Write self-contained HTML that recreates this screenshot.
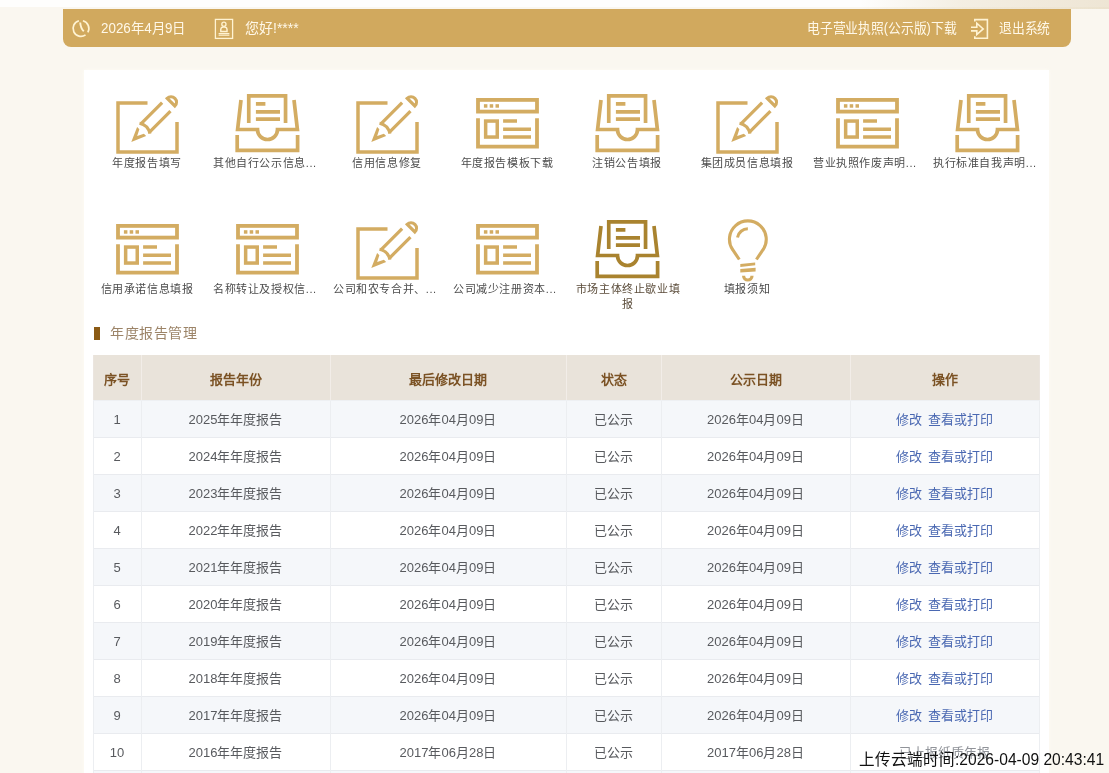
<!DOCTYPE html>
<html lang="zh-CN"><head><meta charset="utf-8">
<style>
*{margin:0;padding:0;box-sizing:border-box}
html,body{width:1109px;height:773px;overflow:hidden;background:#faf7f0;font-family:"Liberation Sans",sans-serif}
.abs{position:absolute}
#topstrip{position:absolute;left:0;top:0;width:1109px;height:7px;background:#fefefd}
#deco{position:absolute;left:860px;top:0;width:249px;height:9px;background:linear-gradient(90deg,rgba(225,210,180,0) 0%,rgba(225,210,180,.35) 40%,rgba(222,205,172,.5) 100%)}
#bar{position:absolute;left:63px;top:9px;width:1008px;height:38px;background:#d1a95e;border-radius:0 0 8px 8px}
.sx{display:inline-block;transform-origin:0 50%}
.bt{position:absolute;top:9px;height:38px;line-height:38px;color:#fff8e8;font-size:14px;white-space:nowrap}
#panel{position:absolute;left:84px;top:70px;width:965px;height:720px;background:#fff;box-shadow:0 0 4px rgba(255,254,246,.9)}
.ic{position:absolute;overflow:visible}
.lbl{position:absolute;width:108px;text-align:center;font-size:11px;letter-spacing:0.6px;line-height:15px;color:#4c4c4c;white-space:nowrap;overflow:hidden}
.hov{white-space:normal;color:#5b4c3a}
#sec{position:absolute;left:94px;top:327px;width:6px;height:13px;background:#8b5a14}
#sect{position:absolute;left:110px;top:323px;font-size:14px;letter-spacing:0.6px;line-height:20px;color:#9c8468}
.th{position:absolute;background:#e9e3da}
.ht{position:absolute;height:45px;line-height:45px;text-align:center;font-size:13px;font-weight:bold;color:#7b5224}
.tr{position:absolute;height:37px;border-bottom:1px solid #e9ebef}
.td{position:absolute;height:37px;line-height:37px;text-align:center;font-size:13px;color:#585a5e}
.vl{position:absolute;width:1px;background:#eceef1}
.vh{position:absolute;width:1px;background:#f2ede8}
.hl{position:absolute;height:1px;background:#eef0f3}
.lk{color:#4a68b2}
.gr{color:#909399}
#stamp{position:absolute;left:859px;top:750px;font-size:15.6px;line-height:20px;color:#111}
</style></head><body><div id="root" style="will-change:transform;position:absolute;left:0;top:0;width:1109px;height:773px;overflow:hidden">
<div id="topstrip"></div>
<div id="deco"></div>
<div id="bar"></div>
<svg class="abs" style="left:70px;top:17px" width="24" height="24" viewBox="0 0 24 24">
<g fill="none" stroke="#fff3d2" stroke-width="1.8"><path d="M8.9 3.8 A7.9 7.9 0 1 0 15.53 17.87 M17.84 15.35 A7.9 7.9 0 0 0 12.9 3.8" stroke-width="1.7"/><path d="M10.2 5.5 Q10.6 11.3 13.8 14.3" stroke-width="1.9"/></g>
</svg>
<div class="bt" style="left:101px"><span class="sx" style="transform:scaleX(0.956)">2026年4月9日</span></div>
<svg class="abs" style="left:208px;top:14px" width="32" height="30" viewBox="208 14 32 30">
<g fill="none" stroke="#fff3d2" stroke-width="1.3"><rect x="215.4" y="19.4" width="17.2" height="19"/><circle cx="223.9" cy="24.3" r="2.1"/>
<path d="M220.8 31.4 Q220.2 26.7 223.9 26.9 Q227.6 26.7 227 31.4 Z" stroke-width="1.5"/><path d="M218.6 33.6 H229.4 M218.6 35.2 H229.4" stroke-width="1.1"/></g>
</svg>
<div class="bt" style="left:245px">您好!****</div>
<div class="bt" style="left:807px"><span class="sx" style="transform:scaleX(0.915)">电子营业执照(公示版)下载</span></div>
<svg class="abs" style="left:964px;top:14px" width="32" height="30" viewBox="964 14 32 30">
<g fill="none" stroke="#fff3d2" stroke-width="1.6"><path d="M974.8 21.6 V19.6 H987.4 V38.2 H974.8 V36.3"/><path d="M971 27.3 H976.8 V23.2 L983.2 28.9 L976.8 34.5 V30.9 H971" stroke-linejoin="miter"/></g>
</svg>
<div class="bt" style="left:999px"><span class="sx" style="transform:scaleX(0.915)">退出系统</span></div>
<div id="panel"></div>
<svg class="ic" style="left:115px;top:92px" width="64" height="64" viewBox="0 0 64 64">
<path d="M32.5 11 H3 V60 H62 V30" fill="none" stroke="#d3ac62" stroke-width="3.5" stroke-linejoin="miter"/>
<g transform="translate(16.3 49.9) rotate(45)" fill="none" stroke="#d3ac62" stroke-width="3.2">
<path d="M-5.9 -49.5 V-19.5 M5.9 -49.5 V-19.5"/>
<path d="M-7.4 -19 Q0 -23.8 7.4 -19"/>
<polygon fill="#d3ac62" stroke="none" points="0,0 -6.4,-14.6 -3.2,-14.6 0,-8.3 3.2,-14.6 6.4,-14.6"/>
<path d="M-5.4 -56.2 H5.4 A5.4 5.4 0 0 0 -5.4 -56.2 Z" stroke-width="3.2"/>
</g>
</svg>
<div class="lbl" style="left:93px;top:156px">年度报告填写</div>
<svg class="ic" style="left:235px;top:92px" width="64" height="64" viewBox="0 0 64 64">
<g fill="none" stroke="#d3ac62" stroke-width="3.7">
<path d="M13.75 31 V3.95 H50.55 V31"/>
<path d="M20.9 11.8 H30.4 M20.9 19.8 H45 M20.9 27.1 H45"/>
<path d="M6 8 L2.6 37.5 H22.5 A10 10 0 0 0 42.5 37.5 H62.4 L59 8"/>
<path d="M2.2 43 V58.4 H62.6 V43"/>
</g>
</svg>
<div class="lbl" style="text-align:left;left:213px;top:156px">其他自行公示信息...</div>
<svg class="ic" style="left:355px;top:92px" width="64" height="64" viewBox="0 0 64 64">
<path d="M32.5 11 H3 V60 H62 V30" fill="none" stroke="#d3ac62" stroke-width="3.5" stroke-linejoin="miter"/>
<g transform="translate(16.3 49.9) rotate(45)" fill="none" stroke="#d3ac62" stroke-width="3.2">
<path d="M-5.9 -49.5 V-19.5 M5.9 -49.5 V-19.5"/>
<path d="M-7.4 -19 Q0 -23.8 7.4 -19"/>
<polygon fill="#d3ac62" stroke="none" points="0,0 -6.4,-14.6 -3.2,-14.6 0,-8.3 3.2,-14.6 6.4,-14.6"/>
<path d="M-5.4 -56.2 H5.4 A5.4 5.4 0 0 0 -5.4 -56.2 Z" stroke-width="3.2"/>
</g>
</svg>
<div class="lbl" style="left:333px;top:156px">信用信息修复</div>
<svg class="ic" style="left:474px;top:92px" width="64" height="64" viewBox="0 0 64 64">
<g fill="none" stroke="#d3ac62" stroke-width="3.8">
<rect x="4" y="7.9" width="59" height="11.7"/>
<path d="M4 26.2 V54.7 H63 V26.2"/>
</g>
<g fill="#d3ac62">
<rect x="9.9" y="12.2" width="3.5" height="3.5"/>
<rect x="15.7" y="12.2" width="3.5" height="3.5"/>
<rect x="21.5" y="12.2" width="3.5" height="3.5"/>
</g>
<g fill="none" stroke="#d3ac62" stroke-width="3.5">
<rect x="11.65" y="29.05" width="11.6" height="16"/>
<path d="M29.1 29.05 H43 M29.1 37.25 H57 M29.1 45 H57"/>
</g>
</svg>
<div class="lbl" style="left:453px;top:156px">年度报告模板下载</div>
<svg class="ic" style="left:595px;top:92px" width="64" height="64" viewBox="0 0 64 64">
<g fill="none" stroke="#d3ac62" stroke-width="3.7">
<path d="M13.75 31 V3.95 H50.55 V31"/>
<path d="M20.9 11.8 H30.4 M20.9 19.8 H45 M20.9 27.1 H45"/>
<path d="M6 8 L2.6 37.5 H22.5 A10 10 0 0 0 42.5 37.5 H62.4 L59 8"/>
<path d="M2.2 43 V58.4 H62.6 V43"/>
</g>
</svg>
<div class="lbl" style="left:573px;top:156px">注销公告填报</div>
<svg class="ic" style="left:715px;top:92px" width="64" height="64" viewBox="0 0 64 64">
<path d="M32.5 11 H3 V60 H62 V30" fill="none" stroke="#d3ac62" stroke-width="3.5" stroke-linejoin="miter"/>
<g transform="translate(16.3 49.9) rotate(45)" fill="none" stroke="#d3ac62" stroke-width="3.2">
<path d="M-5.9 -49.5 V-19.5 M5.9 -49.5 V-19.5"/>
<path d="M-7.4 -19 Q0 -23.8 7.4 -19"/>
<polygon fill="#d3ac62" stroke="none" points="0,0 -6.4,-14.6 -3.2,-14.6 0,-8.3 3.2,-14.6 6.4,-14.6"/>
<path d="M-5.4 -56.2 H5.4 A5.4 5.4 0 0 0 -5.4 -56.2 Z" stroke-width="3.2"/>
</g>
</svg>
<div class="lbl" style="left:693px;top:156px">集团成员信息填报</div>
<svg class="ic" style="left:834px;top:92px" width="64" height="64" viewBox="0 0 64 64">
<g fill="none" stroke="#d3ac62" stroke-width="3.8">
<rect x="4" y="7.9" width="59" height="11.7"/>
<path d="M4 26.2 V54.7 H63 V26.2"/>
</g>
<g fill="#d3ac62">
<rect x="9.9" y="12.2" width="3.5" height="3.5"/>
<rect x="15.7" y="12.2" width="3.5" height="3.5"/>
<rect x="21.5" y="12.2" width="3.5" height="3.5"/>
</g>
<g fill="none" stroke="#d3ac62" stroke-width="3.5">
<rect x="11.65" y="29.05" width="11.6" height="16"/>
<path d="M29.1 29.05 H43 M29.1 37.25 H57 M29.1 45 H57"/>
</g>
</svg>
<div class="lbl" style="text-align:left;left:813px;top:156px">营业执照作废声明...</div>
<svg class="ic" style="left:955px;top:92px" width="64" height="64" viewBox="0 0 64 64">
<g fill="none" stroke="#d3ac62" stroke-width="3.7">
<path d="M13.75 31 V3.95 H50.55 V31"/>
<path d="M20.9 11.8 H30.4 M20.9 19.8 H45 M20.9 27.1 H45"/>
<path d="M6 8 L2.6 37.5 H22.5 A10 10 0 0 0 42.5 37.5 H62.4 L59 8"/>
<path d="M2.2 43 V58.4 H62.6 V43"/>
</g>
</svg>
<div class="lbl" style="text-align:left;left:933px;top:156px">执行标准自我声明...</div>
<svg class="ic" style="left:114px;top:218px" width="64" height="64" viewBox="0 0 64 64">
<g fill="none" stroke="#d3ac62" stroke-width="3.8">
<rect x="4" y="7.9" width="59" height="11.7"/>
<path d="M4 26.2 V54.7 H63 V26.2"/>
</g>
<g fill="#d3ac62">
<rect x="9.9" y="12.2" width="3.5" height="3.5"/>
<rect x="15.7" y="12.2" width="3.5" height="3.5"/>
<rect x="21.5" y="12.2" width="3.5" height="3.5"/>
</g>
<g fill="none" stroke="#d3ac62" stroke-width="3.5">
<rect x="11.65" y="29.05" width="11.6" height="16"/>
<path d="M29.1 29.05 H43 M29.1 37.25 H57 M29.1 45 H57"/>
</g>
</svg>
<div class="lbl" style="left:93px;top:282px">信用承诺信息填报</div>
<svg class="ic" style="left:234px;top:218px" width="64" height="64" viewBox="0 0 64 64">
<g fill="none" stroke="#d3ac62" stroke-width="3.8">
<rect x="4" y="7.9" width="59" height="11.7"/>
<path d="M4 26.2 V54.7 H63 V26.2"/>
</g>
<g fill="#d3ac62">
<rect x="9.9" y="12.2" width="3.5" height="3.5"/>
<rect x="15.7" y="12.2" width="3.5" height="3.5"/>
<rect x="21.5" y="12.2" width="3.5" height="3.5"/>
</g>
<g fill="none" stroke="#d3ac62" stroke-width="3.5">
<rect x="11.65" y="29.05" width="11.6" height="16"/>
<path d="M29.1 29.05 H43 M29.1 37.25 H57 M29.1 45 H57"/>
</g>
</svg>
<div class="lbl" style="text-align:left;left:213px;top:282px">名称转让及授权信...</div>
<svg class="ic" style="left:355px;top:218px" width="64" height="64" viewBox="0 0 64 64">
<path d="M32.5 11 H3 V60 H62 V30" fill="none" stroke="#d3ac62" stroke-width="3.5" stroke-linejoin="miter"/>
<g transform="translate(16.3 49.9) rotate(45)" fill="none" stroke="#d3ac62" stroke-width="3.2">
<path d="M-5.9 -49.5 V-19.5 M5.9 -49.5 V-19.5"/>
<path d="M-7.4 -19 Q0 -23.8 7.4 -19"/>
<polygon fill="#d3ac62" stroke="none" points="0,0 -6.4,-14.6 -3.2,-14.6 0,-8.3 3.2,-14.6 6.4,-14.6"/>
<path d="M-5.4 -56.2 H5.4 A5.4 5.4 0 0 0 -5.4 -56.2 Z" stroke-width="3.2"/>
</g>
</svg>
<div class="lbl" style="text-align:left;left:333px;top:282px">公司和农专合并、...</div>
<svg class="ic" style="left:474px;top:218px" width="64" height="64" viewBox="0 0 64 64">
<g fill="none" stroke="#d3ac62" stroke-width="3.8">
<rect x="4" y="7.9" width="59" height="11.7"/>
<path d="M4 26.2 V54.7 H63 V26.2"/>
</g>
<g fill="#d3ac62">
<rect x="9.9" y="12.2" width="3.5" height="3.5"/>
<rect x="15.7" y="12.2" width="3.5" height="3.5"/>
<rect x="21.5" y="12.2" width="3.5" height="3.5"/>
</g>
<g fill="none" stroke="#d3ac62" stroke-width="3.5">
<rect x="11.65" y="29.05" width="11.6" height="16"/>
<path d="M29.1 29.05 H43 M29.1 37.25 H57 M29.1 45 H57"/>
</g>
</svg>
<div class="lbl" style="text-align:left;left:453px;top:282px">公司减少注册资本...</div>
<svg class="ic" style="left:595px;top:218px" width="64" height="64" viewBox="0 0 64 64">
<g fill="none" stroke="#a9832f" stroke-width="3.7">
<path d="M13.75 31 V3.95 H50.55 V31"/>
<path d="M20.9 11.8 H30.4 M20.9 19.8 H45 M20.9 27.1 H45"/>
<path d="M6 8 L2.6 37.5 H22.5 A10 10 0 0 0 42.5 37.5 H62.4 L59 8"/>
<path d="M2.2 43 V58.4 H62.6 V43"/>
</g>
</svg>
<div class="lbl hov" style="left:574px;top:282px">市场主体终止歇业填报</div>
<svg class="ic" style="left:715px;top:218px" width="64" height="64" viewBox="0 0 64 64">
<g fill="none" stroke="#d3ac62" stroke-width="3.1">
<path d="M24.3 41.5 L17.86 31.99 A18.4 18.4 0 1 1 47.84 31.99 L41.4 41.5"/>
<path d="M22.5 19.5 A10.5 10.5 0 0 1 32.85 10.8" stroke-width="3"/>
<path d="M28.6 57.8 A4.2 4.2 0 0 0 37 57.8" stroke-width="3.2"/>
</g>
<g fill="#d3ac62">
<polygon points="25.3,46.1 40.2,44.4 40.2,47.3 25.3,49"/>
<polygon points="25.3,51 40.6,49.8 40.6,53.5 25.3,54.6"/>
</g>
</svg>
<div class="lbl" style="left:693px;top:282px">填报须知</div>
<div id="sec"></div>
<div id="sect">年度报告管理</div>
<div class="th" style="left:93px;top:355px;width:947px;height:45px"></div>
<div class="ht" style="left:93px;top:356.5px;width:48px">序号</div>
<div class="ht" style="left:141px;top:356.5px;width:189px">报告年份</div>
<div class="ht" style="left:330px;top:356.5px;width:236px">最后修改日期</div>
<div class="ht" style="left:566px;top:356.5px;width:95px">状态</div>
<div class="ht" style="left:661px;top:356.5px;width:189px">公示日期</div>
<div class="ht" style="left:850px;top:356.5px;width:189px">操作</div>
<div class="tr" style="left:93px;top:401px;width:947px;background:#f5f7fa"></div>
<div class="td" style="left:93px;top:401px;width:48px">1</div>
<div class="td" style="left:141px;top:401px;width:189px">2025年年度报告</div>
<div class="td" style="left:330px;top:401px;width:236px">2026年04月09日</div>
<div class="td" style="left:566px;top:401px;width:95px">已公示</div>
<div class="td" style="left:661px;top:401px;width:189px">2026年04月09日</div>
<div class="td" style="left:850px;top:401px;width:189px"><span class="lk">修改</span><span class="lk" style="margin-left:6px">查看或打印</span></div>
<div class="tr" style="left:93px;top:438px;width:947px;background:#ffffff"></div>
<div class="td" style="left:93px;top:438px;width:48px">2</div>
<div class="td" style="left:141px;top:438px;width:189px">2024年年度报告</div>
<div class="td" style="left:330px;top:438px;width:236px">2026年04月09日</div>
<div class="td" style="left:566px;top:438px;width:95px">已公示</div>
<div class="td" style="left:661px;top:438px;width:189px">2026年04月09日</div>
<div class="td" style="left:850px;top:438px;width:189px"><span class="lk">修改</span><span class="lk" style="margin-left:6px">查看或打印</span></div>
<div class="tr" style="left:93px;top:475px;width:947px;background:#f5f7fa"></div>
<div class="td" style="left:93px;top:475px;width:48px">3</div>
<div class="td" style="left:141px;top:475px;width:189px">2023年年度报告</div>
<div class="td" style="left:330px;top:475px;width:236px">2026年04月09日</div>
<div class="td" style="left:566px;top:475px;width:95px">已公示</div>
<div class="td" style="left:661px;top:475px;width:189px">2026年04月09日</div>
<div class="td" style="left:850px;top:475px;width:189px"><span class="lk">修改</span><span class="lk" style="margin-left:6px">查看或打印</span></div>
<div class="tr" style="left:93px;top:512px;width:947px;background:#ffffff"></div>
<div class="td" style="left:93px;top:512px;width:48px">4</div>
<div class="td" style="left:141px;top:512px;width:189px">2022年年度报告</div>
<div class="td" style="left:330px;top:512px;width:236px">2026年04月09日</div>
<div class="td" style="left:566px;top:512px;width:95px">已公示</div>
<div class="td" style="left:661px;top:512px;width:189px">2026年04月09日</div>
<div class="td" style="left:850px;top:512px;width:189px"><span class="lk">修改</span><span class="lk" style="margin-left:6px">查看或打印</span></div>
<div class="tr" style="left:93px;top:549px;width:947px;background:#f5f7fa"></div>
<div class="td" style="left:93px;top:549px;width:48px">5</div>
<div class="td" style="left:141px;top:549px;width:189px">2021年年度报告</div>
<div class="td" style="left:330px;top:549px;width:236px">2026年04月09日</div>
<div class="td" style="left:566px;top:549px;width:95px">已公示</div>
<div class="td" style="left:661px;top:549px;width:189px">2026年04月09日</div>
<div class="td" style="left:850px;top:549px;width:189px"><span class="lk">修改</span><span class="lk" style="margin-left:6px">查看或打印</span></div>
<div class="tr" style="left:93px;top:586px;width:947px;background:#ffffff"></div>
<div class="td" style="left:93px;top:586px;width:48px">6</div>
<div class="td" style="left:141px;top:586px;width:189px">2020年年度报告</div>
<div class="td" style="left:330px;top:586px;width:236px">2026年04月09日</div>
<div class="td" style="left:566px;top:586px;width:95px">已公示</div>
<div class="td" style="left:661px;top:586px;width:189px">2026年04月09日</div>
<div class="td" style="left:850px;top:586px;width:189px"><span class="lk">修改</span><span class="lk" style="margin-left:6px">查看或打印</span></div>
<div class="tr" style="left:93px;top:623px;width:947px;background:#f5f7fa"></div>
<div class="td" style="left:93px;top:623px;width:48px">7</div>
<div class="td" style="left:141px;top:623px;width:189px">2019年年度报告</div>
<div class="td" style="left:330px;top:623px;width:236px">2026年04月09日</div>
<div class="td" style="left:566px;top:623px;width:95px">已公示</div>
<div class="td" style="left:661px;top:623px;width:189px">2026年04月09日</div>
<div class="td" style="left:850px;top:623px;width:189px"><span class="lk">修改</span><span class="lk" style="margin-left:6px">查看或打印</span></div>
<div class="tr" style="left:93px;top:660px;width:947px;background:#ffffff"></div>
<div class="td" style="left:93px;top:660px;width:48px">8</div>
<div class="td" style="left:141px;top:660px;width:189px">2018年年度报告</div>
<div class="td" style="left:330px;top:660px;width:236px">2026年04月09日</div>
<div class="td" style="left:566px;top:660px;width:95px">已公示</div>
<div class="td" style="left:661px;top:660px;width:189px">2026年04月09日</div>
<div class="td" style="left:850px;top:660px;width:189px"><span class="lk">修改</span><span class="lk" style="margin-left:6px">查看或打印</span></div>
<div class="tr" style="left:93px;top:697px;width:947px;background:#f5f7fa"></div>
<div class="td" style="left:93px;top:697px;width:48px">9</div>
<div class="td" style="left:141px;top:697px;width:189px">2017年年度报告</div>
<div class="td" style="left:330px;top:697px;width:236px">2026年04月09日</div>
<div class="td" style="left:566px;top:697px;width:95px">已公示</div>
<div class="td" style="left:661px;top:697px;width:189px">2026年04月09日</div>
<div class="td" style="left:850px;top:697px;width:189px"><span class="lk">修改</span><span class="lk" style="margin-left:6px">查看或打印</span></div>
<div class="tr" style="left:93px;top:734px;width:947px;background:#ffffff"></div>
<div class="td" style="left:93px;top:734px;width:48px">10</div>
<div class="td" style="left:141px;top:734px;width:189px">2016年年度报告</div>
<div class="td" style="left:330px;top:734px;width:236px">2017年06月28日</div>
<div class="td" style="left:566px;top:734px;width:95px">已公示</div>
<div class="td" style="left:661px;top:734px;width:189px">2017年06月28日</div>
<div class="td" style="left:850px;top:734px;width:189px"><span class="gr">已上报纸质年报</span></div>
<div class="tr" style="left:93px;top:771px;width:947px;background:#f5f7fa"></div>
<div class="td" style="left:93px;top:771px;width:48px">11</div>
<div class="td" style="left:141px;top:771px;width:189px">2015年年度报告</div>
<div class="td" style="left:330px;top:771px;width:236px">2017年06月28日</div>
<div class="td" style="left:566px;top:771px;width:95px">已公示</div>
<div class="td" style="left:661px;top:771px;width:189px">2017年06月28日</div>
<div class="td" style="left:850px;top:771px;width:189px"><span class="gr">已上报纸质年报</span></div>
<div class="vl" style="left:93px;top:400px;height:380px"></div>
<div class="vl" style="left:93px;top:355px;height:45px;background:#ebe5df"></div>
<div class="vl" style="left:141px;top:400px;height:380px"></div>
<div class="vh" style="left:141px;top:355px;height:45px"></div>
<div class="vl" style="left:330px;top:400px;height:380px"></div>
<div class="vh" style="left:330px;top:355px;height:45px"></div>
<div class="vl" style="left:566px;top:400px;height:380px"></div>
<div class="vh" style="left:566px;top:355px;height:45px"></div>
<div class="vl" style="left:661px;top:400px;height:380px"></div>
<div class="vh" style="left:661px;top:355px;height:45px"></div>
<div class="vl" style="left:850px;top:400px;height:380px"></div>
<div class="vh" style="left:850px;top:355px;height:45px"></div>
<div class="vl" style="left:1039px;top:400px;height:380px"></div>
<div class="vl" style="left:1039px;top:355px;height:45px;background:#ebe5df"></div>
<div class="hl" style="left:93px;top:400px;width:947px"></div>
<div id="stamp">上传云端时间:2026-04-09 20:43:41</div>
</div></body></html>
